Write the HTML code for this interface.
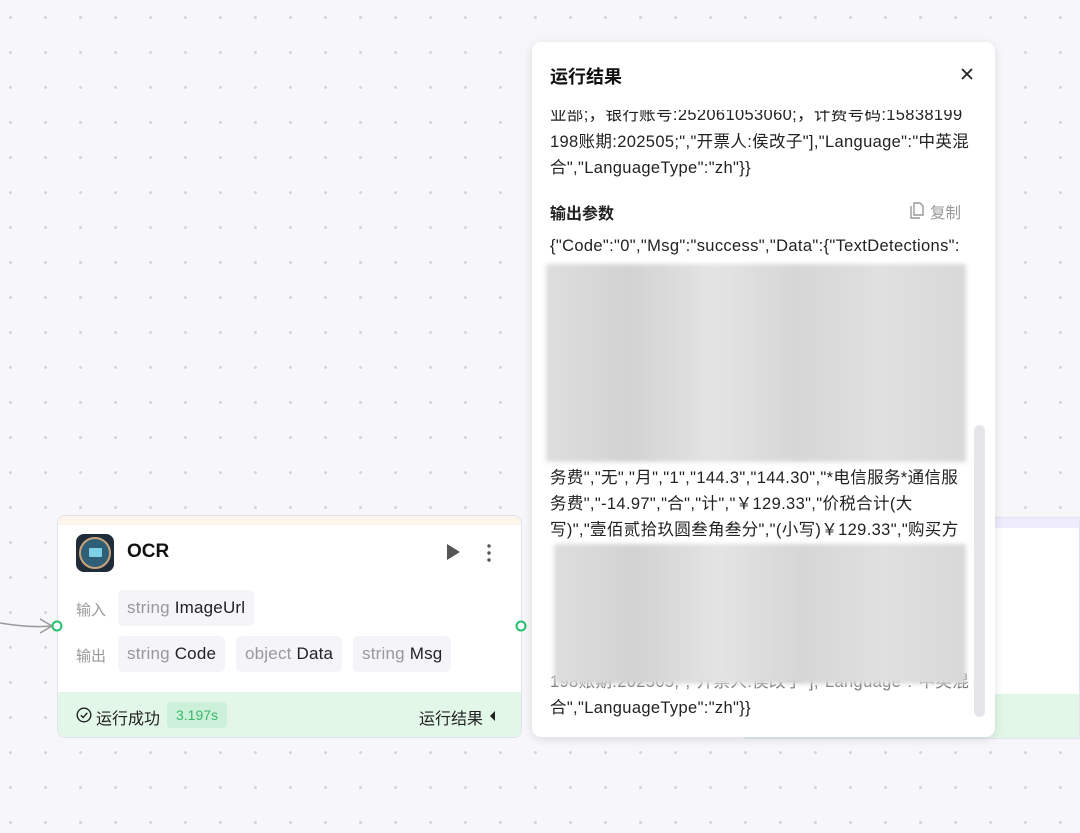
<!DOCTYPE html>
<html><head><meta charset="utf-8"><style>
*{margin:0;padding:0;box-sizing:border-box}
body{width:1080px;height:833px;overflow:hidden;position:relative;font-family:"Liberation Sans","Noto Sans CJK SC",sans-serif;background-color:#f7f7fa;background-image:radial-gradient(circle,#d4d4d8 1.3px,transparent 1.6px);background-size:35px 35px;background-position:-7px 0px}
.abs{position:absolute}
.node{left:57px;top:515px;width:465px;height:223px;background:#fff;border:1px solid #e0e0ee;border-radius:8px;overflow:hidden}
.tag{position:absolute;height:36px;background:#f5f5f9;border-radius:5px;font-size:17px;color:#222;line-height:36px;padding:0 9px;letter-spacing:0.2px}
.tag i{font-style:normal;color:#999}
.lbl{position:absolute;font-size:15px;color:#999}
.pop{left:532px;top:42px;width:463px;height:695px;background:#fff;border-radius:9px;box-shadow:0 2px 10px rgba(0,0,0,.12);overflow:hidden}
.t{position:absolute;left:18px;font-size:16.5px;color:#222;line-height:26px;white-space:nowrap;letter-spacing:0.35px}
.blur{position:absolute;background:linear-gradient(90deg,#dedede,#d2d2d2 20%,#e4e4e4 40%,#d6d6d6 60%,#e0e0e0 80%,#d8d8d8);filter:blur(2px)}
</style></head><body>
<div class="abs" style="left:740px;top:517px;width:340px;height:222px;background:#fff;border:1px solid #e4e2f4;border-radius:8px 0 0 8px;overflow:hidden">
<div style="height:10px;background:#efecfc"></div>
<div style="position:absolute;left:0;right:0;top:176px;bottom:0;background:#e3f7e9"></div>
</div>
<svg class="abs" style="left:0;top:610px" width="60" height="30"><path d="M0 13 Q30 18 52 16" stroke="#999" stroke-width="1.5" fill="none"/><path d="M40 9 L52 16 L40 23" stroke="#999" stroke-width="1.5" fill="none"/></svg>
<div class="node abs">
<div style="height:9px;background:#fdf4ec"></div>
<div class="abs" style="left:18px;top:18px;width:38px;height:38px;border-radius:8px;background:#1f2d3a"><div style="position:absolute;left:3px;top:3px;width:32px;height:32px;border-radius:50%;border:2px solid #c9a47a;background:#2f5f77"><div style="position:absolute;left:8px;top:9px;width:13px;height:9px;background:#7ed0e8;border-radius:1px"></div></div></div>
<div class="abs" style="left:69px;top:25px;font-size:19px;font-weight:bold;color:#111">OCR</div>
<svg class="abs" style="left:387px;top:27px" width="16" height="18"><path d="M2 1 L15 9 L2 17Z" fill="#555"/></svg>
<svg class="abs" style="left:428px;top:27px" width="6" height="20"><circle cx="3" cy="3" r="1.7" fill="#555"/><circle cx="3" cy="10" r="1.7" fill="#555"/><circle cx="3" cy="17" r="1.7" fill="#555"/></svg>
<div class="lbl" style="left:18px;top:83px">输入</div>
<div class="tag" style="left:60px;top:74px"><i>string</i> ImageUrl</div>
<div class="lbl" style="left:18px;top:129px">输出</div>
<div class="tag" style="left:60px;top:120px"><i>string</i> Code</div>
<div class="tag" style="left:178px;top:120px"><i>object</i> Data</div>
<div class="tag" style="left:295px;top:120px"><i>string</i> Msg</div>
<div class="abs" style="left:0;right:0;top:176px;bottom:0;background:#e3f7e9">
<svg class="abs" style="left:18px;top:15px" width="16" height="16"><circle cx="8" cy="8" r="6.8" stroke="#222" stroke-width="1.4" fill="none"/><path d="M4.8 8.2 L7.2 10.5 L11.3 5.8" stroke="#222" stroke-width="1.4" fill="none"/></svg>
<div class="abs" style="left:38px;top:13px;font-size:16px;color:#222">运行成功</div>
<div class="abs" style="left:109px;top:10px;height:26px;padding:0 9px;background:#cdf0da;border-radius:4px;color:#3ab86a;font-size:14px;line-height:26px">3.197s</div>
<div class="abs" style="left:361px;top:13px;font-size:16px;color:#222">运行结果</div>
<svg class="abs" style="left:431px;top:19px" width="8" height="10"><path d="M6 0 L1 5 L6 10Z" fill="#222"/></svg>
</div>
</div>
<svg class="abs" style="left:50px;top:619px" width="14" height="14"><circle cx="7" cy="7" r="4.5" fill="#fff" stroke="#22c06a" stroke-width="2"/></svg>
<svg class="abs" style="left:514px;top:619px" width="14" height="14"><circle cx="7" cy="7" r="4.5" fill="#fff" stroke="#22c06a" stroke-width="2"/></svg>
<div class="pop abs">
<div class="abs" style="left:18px;top:21px;font-size:18px;font-weight:bold;color:#111">运行结果</div>
<svg class="abs" style="left:429px;top:26px" width="12" height="12"><path d="M1 1 L11 11 M11 1 L1 11" stroke="#222" stroke-width="1.8"/></svg>
<div class="t" style="top:60px;clip-path:inset(8px 0 0 0)">业部;，银行账号:252061053060;，计费号码:15838199</div>
<div class="t" style="top:87px">198账期:202505;","开票人:侯改子"],"Language":"中英混</div>
<div class="t" style="top:113px">合","LanguageType":"zh"}}</div>
<div class="abs" style="left:18px;top:158px;font-size:16px;font-weight:bold;color:#222">输出参数</div>
<svg class="abs" style="left:377px;top:160px" width="16" height="17"><path d="M5 1 H11 L14 4 V13 H5Z M2 4 V16 H11" stroke="#999" stroke-width="1.4" fill="none"/></svg>
<div class="abs" style="left:398px;top:159px;font-size:15.5px;color:#999">复制</div>
<div class="t" style="top:191px">{"Code":"0","Msg":"success","Data":{"TextDetections":</div>
<div class="blur" style="left:14px;top:222px;width:420px;height:198px"></div>
<div class="t" style="top:423px">务费","无","月","1","144.3","144.30","*电信服务*通信服</div>
<div class="t" style="top:449px">务费","-14.97","合","计","￥129.33","价税合计(大</div>
<div class="t" style="top:475px">写)","壹佰贰拾玖圆叁角叁分","(小写)￥129.33","购买方</div>
<div class="t" style="top:627px;color:#777">198账期:202505;","开票人:侯改子"],"Language":"中英混</div>
<div class="blur" style="left:22px;top:502px;width:412px;height:140px"></div>
<div class="t" style="top:653px">合","LanguageType":"zh"}}</div>
<div class="abs" style="left:442px;top:383px;width:11px;height:292px;background:#e6e6ea;border-radius:6px"></div>
</div>
</body></html>
